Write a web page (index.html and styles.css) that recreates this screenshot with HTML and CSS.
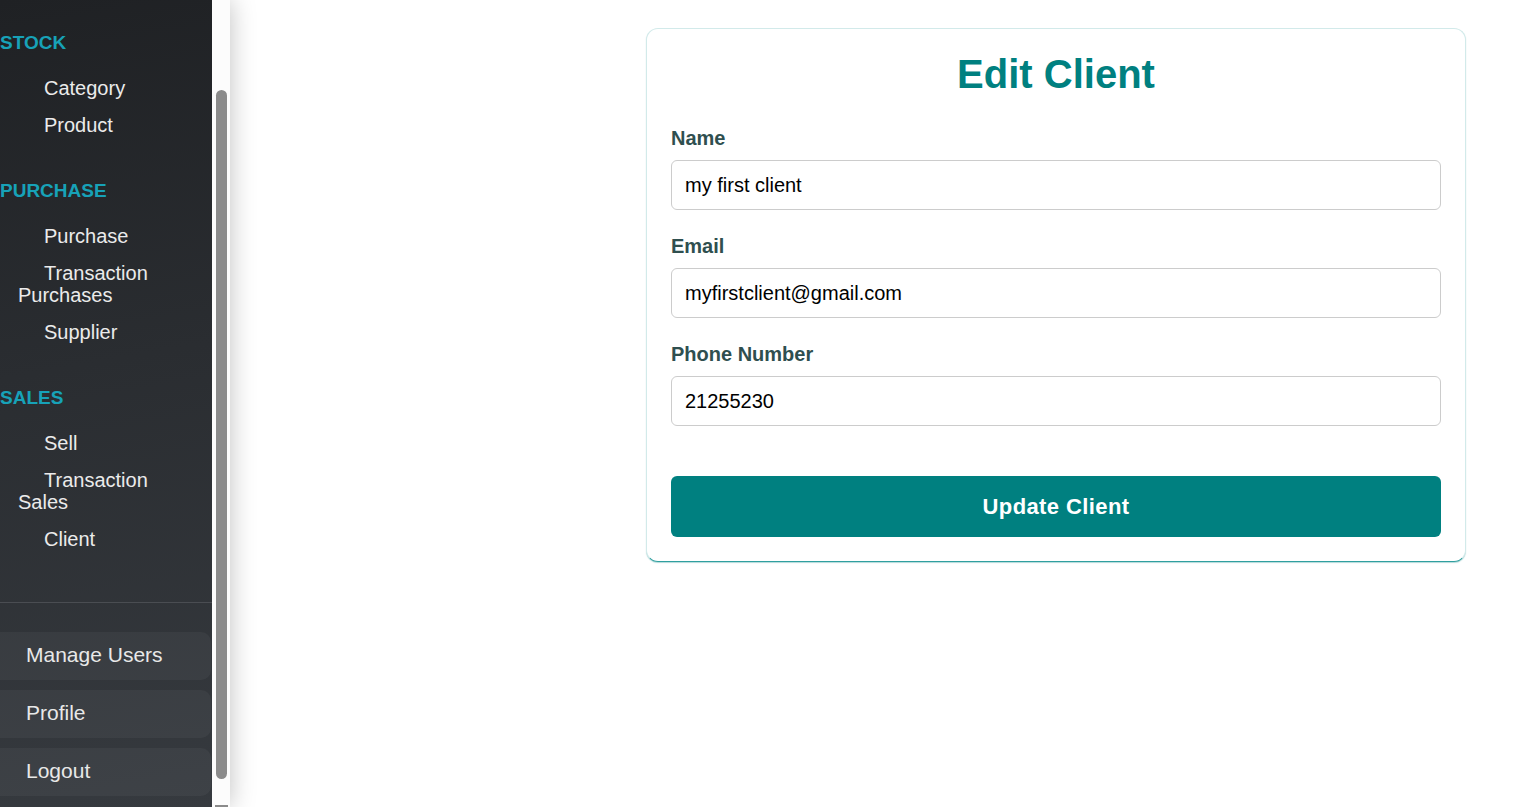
FILE: index.html
```html
<!DOCTYPE html>
<html lang="en">
<head>
<meta charset="utf-8">
<title>Edit Client</title>
<link rel="stylesheet" href="styles.css">
</head>
<body>
<div class="layout">
  <aside class="sidebar">
    <div class="sidebar-inner">
      <nav class="menu">
        <section class="menu-section">
          <h3 class="menu-title">STOCK</h3>
          <ul class="menu-list">
            <li class="menu-item"><a class="menu-link" href="#">Category</a></li>
            <li class="menu-item"><a class="menu-link" href="#">Product</a></li>
          </ul>
        </section>
        <section class="menu-section">
          <h3 class="menu-title">PURCHASE</h3>
          <ul class="menu-list">
            <li class="menu-item"><a class="menu-link" href="#">Purchase</a></li>
            <li class="menu-item"><a class="menu-link" href="#">Transaction Purchases</a></li>
            <li class="menu-item"><a class="menu-link" href="#">Supplier</a></li>
          </ul>
        </section>
        <section class="menu-section">
          <h3 class="menu-title">SALES</h3>
          <ul class="menu-list">
            <li class="menu-item"><a class="menu-link" href="#">Sell</a></li>
            <li class="menu-item"><a class="menu-link" href="#">Transaction Sales</a></li>
            <li class="menu-item"><a class="menu-link" href="#">Client</a></li>
          </ul>
        </section>
      </nav>
      <div class="sidebar-footer">
        <a class="footer-btn" href="#">Manage Users</a>
        <a class="footer-btn" href="#">Profile</a>
        <a class="footer-btn" href="#">Logout</a>
      </div>
    </div>
    <div class="scrollbar">
      <div class="scroll-thumb"></div>
      <div class="scroll-arrow"></div>
    </div>
  </aside>
  <main class="main">
    <form class="card">
      <h1 class="card-title">Edit Client</h1>
      <div class="form-group">
        <label class="form-label" for="name">Name</label>
        <input class="form-input" id="name" type="text" value="my first client">
      </div>
      <div class="form-group">
        <label class="form-label" for="email">Email</label>
        <input class="form-input" id="email" type="text" value="myfirstclient@gmail.com">
      </div>
      <div class="form-group">
        <label class="form-label" for="phone">Phone Number</label>
        <input class="form-input" id="phone" type="text" value="21255230">
      </div>
      <button class="submit-btn" type="button">Update Client</button>
    </form>
  </main>
</div>
</body>
</html>
```

FILE: styles.css
```css
* {
  box-sizing: border-box;
}

html, body {
  margin: 0;
  padding: 0;
  background: #ffffff;
  font-family: "Liberation Sans", Arial, sans-serif;
}

.layout {
  display: flex;
  height: 807px;
  overflow: hidden;
}

.sidebar {
  display: flex;
  width: 230px;
  flex: 0 0 230px;
  height: 807px;
  box-shadow: 0 0 24px rgba(0, 0, 0, 0.25);
}

.sidebar-inner {
  width: 212px;
  height: 807px;
  display: flex;
  flex-direction: column;
  background: linear-gradient(170deg, #1f2124 0%, #2a2d31 45%, #363a3f 100%);
}

.menu {
  padding-top: 32px;
}

.menu-title {
  margin: 0 0 16px;
  font-size: 19px;
  line-height: 22px;
  font-weight: bold;
  color: #17a2b8;
}

.menu-list {
  list-style: none;
  margin: 0 0 36px;
  padding: 0;
}

.menu-item {
  padding: 6.5px 18px 8.5px 18px;
  font-size: 20px;
  line-height: 22px;
}

.menu-link {
  padding-left: 26px;
  color: #ebebeb;
  text-decoration: none;
}

.sidebar-footer {
  margin-top: auto;
  border-top: 1px solid #4a4d52;
  padding: 29px 1px 11px 0;
  display: flex;
  flex-direction: column;
  gap: 10px;
}

.footer-btn {
  display: block;
  height: 48px;
  line-height: 46px;
  padding-left: 26px;
  font-size: 21px;
  color: #e8e8e8;
  text-decoration: none;
  background: rgba(255, 255, 255, 0.045);
  border-radius: 0 10px 10px 0;
}

.scrollbar {
  width: 18px;
  height: 807px;
  background: #fcfcfc;
  display: flex;
  flex-direction: column;
}

.scroll-thumb {
  margin: 90px 3px 0 4px;
  height: 689px;
  border-radius: 6px;
  background: #8b8b8b;
}

.scroll-arrow {
  margin: auto 2px 0 3px;
  height: 2px;
  background: #8b8b8b;
}

.main {
  flex: 1;
  display: flex;
  justify-content: flex-end;
  align-items: flex-start;
  padding: 28px 64px 0 0;
}

.card {
  width: 820px;
  padding: 22px 24px 24px;
  background: #ffffff;
  border: 1px solid #d2eaea;
  border-bottom-color: #2f9f9f;
  border-radius: 12px;
  box-shadow: 0 1px 1px rgba(0, 128, 128, 0.3);
}

.card-title {
  margin: 0 0 29px;
  text-align: center;
  font-size: 40px;
  line-height: 46px;
  font-weight: bold;
  color: #008080;
}

.form-group {
  margin-bottom: 24px;
}

.form-label {
  display: block;
  margin-bottom: 10px;
  font-size: 20px;
  line-height: 24px;
  font-weight: bold;
  color: #2f4f4f;
}

.form-input {
  display: block;
  width: 100%;
  height: 50px;
  padding: 0 13px;
  border: 1px solid #cccccc;
  border-radius: 6px;
  font-family: "Liberation Sans", Arial, sans-serif;
  font-size: 20px;
  color: #000000;
  background: #ffffff;
  outline: none;
}

.submit-btn {
  display: block;
  width: 100%;
  height: 61px;
  margin-top: 50px;
  border: none;
  border-radius: 6px;
  background: #008080;
  color: #ffffff;
  font-family: "Liberation Sans", Arial, sans-serif;
  font-size: 22px;
  font-weight: bold;
  letter-spacing: 0.4px;
  cursor: pointer;
}
```
